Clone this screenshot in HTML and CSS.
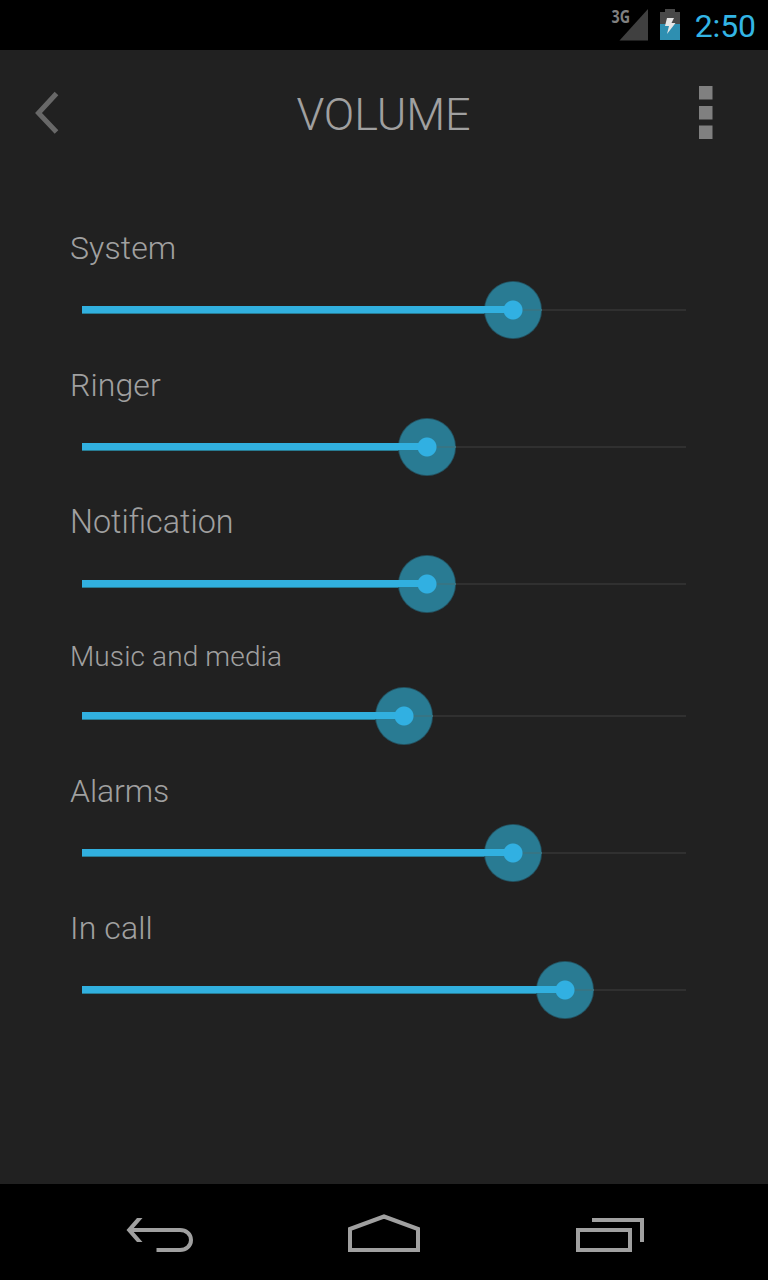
FILE: index.html
```html
<!DOCTYPE html>
<html lang="en">
<head>
<meta charset="utf-8">
<title>Volume</title>
<link rel="stylesheet" href="styles.css">
</head>
<body>
<div class="screen">
  <div class="status">
    <span class="network">3G</span>
    <svg class="signal" width="29" height="32" viewBox="0 0 29 32"><path d="M29 0V31.500H0.500Z" fill="#404040"/></svg>
    <svg class="battery" width="20" height="32" viewBox="0 0 20 32"><path d="M5 0H15V3H20V15H0V3H5Z" fill="#484848"/><path d="M0 15H20V31H0Z" fill="#2e8fb1"/><path d="M7 9H14L11.5 14H15.5L7 25L9 17H5Z" fill="#e6e6e6"/></svg>
    <span class="clock">2:50</span>
  </div>
  <header class="header">
    <svg width="26" height="44" viewBox="0 0 26 44"><path d="M22.5 2.5L4.500 22L22.5 41" fill="none" stroke="#686868" stroke-width="5"/></svg>
    <h1 class="title">VOLUME</h1>
    <svg width="14" height="54" viewBox="0 0 14 54"><path d="M0 0H13.5V13.5H0ZM0 20H13.5V33.5H0ZM0 39.5H13.5V53H0Z" fill="#808080"/></svg>
  </header>
  <main class="list">
    <section class="row"><div class="label">System</div><div class="slider"><div class="fill" style="width:431px"></div><div class="thumb"></div><div class="track"></div></div></section>
    <section class="row"><div class="label">Ringer</div><div class="slider"><div class="fill" style="width:345px"></div><div class="thumb"></div><div class="track"></div></div></section>
    <section class="row"><div class="label joined">Notification</div><div class="slider"><div class="fill" style="width:345px"></div><div class="thumb"></div><div class="track"></div></div></section>
    <section class="row"><div class="label small">Music and media</div><div class="slider"><div class="fill" style="width:322px"></div><div class="thumb"></div><div class="track"></div></div></section>
    <section class="row"><div class="label flush">Alarms</div><div class="slider"><div class="fill" style="width:431px"></div><div class="thumb"></div><div class="track"></div></div></section>
    <section class="row"><div class="label">In call</div><div class="slider"><div class="fill" style="width:483px"></div><div class="thumb"></div><div class="track"></div></div></section>
  </main>
  <nav class="nav">
    <svg class="back" width="68" height="40" viewBox="0 0 68 40"><path d="M5 16H54C60 16 65 20 65 26C65 32 60 36 54 36H30.500" fill="none" stroke="#a0a0a0" stroke-width="4"/><path d="M11 4H16.500L6 16L16.500 28H11L0.500 16Z" fill="#a0a0a0"/></svg>
    <svg width="72" height="40" viewBox="0 0 72 40"><path d="M2 38V17L36 4.500L70 17V38Z" fill="none" stroke="#a0a0a0" stroke-width="4"/></svg>
    <svg width="68" height="40" viewBox="0 0 68 40"><path d="M2 18H54V38H2ZM16 8H66V30" fill="none" stroke="#a0a0a0" stroke-width="4"/></svg>
  </nav>
</div>
</body>
</html>
```
FILE: styles.css
```css
body {
  margin: 0;
  background: #212121;
  font-family: Roboto, sans-serif;
}
.screen {
  display: flex;
  flex-direction: column;
  width: 768px;
  height: 1280px;
  overflow: hidden;
}
.status {
  display: flex;
  box-sizing: border-box;
  height: 50px;
  padding: 9px 12px 0 0;
  justify-content: flex-end;
  background: #000;
}
.network {
  margin-right: -11px;
  font: bold 17px/16px "Noto Sans", sans-serif;
  transform: scaleX(0.84);
  transform-origin: right;
  color: #808080;
}
.signal { margin-right: 12px; }
.battery { margin-right: 15px; }
.clock {
  font-size: 32px;
  letter-spacing: -0.1px;
  line-height: 34px;
  color: #33b5e5;
}
.header {
  display: flex;
  box-sizing: border-box;
  height: 126px;
  padding: 0 55px 0 34px;
  align-items: center;
  justify-content: space-between;
}
.title {
  margin: 3px 0 0 8px;
  font-size: 45px;
  font-weight: 300;
  letter-spacing: -0.1px;
  line-height: 54px;
  color: #a0a0a0;
}
.list {
  flex: 1;
  padding: 53px 82px 0 70px;
}
.label {
  font-size: 32px;
  font-weight: 300;
  letter-spacing: 0.12px;
  line-height: 38px;
  color: #a0a0a0;
}
.flush { letter-spacing: -0.1px; }
.joined {
  font-size: 32.3px;
  letter-spacing: normal;
}
.small {
  font-size: 28px;
  line-height: 33px;
}
.slider {
  display: flex;
  height: 58px;
  margin: 14px 0 27px 12px;
  align-items: center;
}
.fill {
  height: 8px;
  background: linear-gradient(#31b0df 7px, #287c93 7px);
}
.thumb {
  width: 58px;
  height: 58px;
  margin: 0 -29px;
  border-radius: 50%;
  background:
    radial-gradient(circle, #31b0e2 9px, transparent 10px),
    linear-gradient(#31b0df, #31b0df) 0 25px / 29px 7px no-repeat,
    linear-gradient(#367585, #367585) 29px 28px / 29px 2px no-repeat,
    radial-gradient(circle, #297b93 27.5px, #235463 28.5px);
}
.track {
  flex: 1;
  height: 2px;
  margin-left: 29px;
  background: #303030;
}
.nav {
  display: flex;
  box-sizing: border-box;
  height: 96px;
  padding: 28px 124px 0 126px;
  justify-content: space-between;
  align-items: flex-start;
  background: #000;
}
.nav .back {
  margin: 2px -2px 0 0;
}
```
